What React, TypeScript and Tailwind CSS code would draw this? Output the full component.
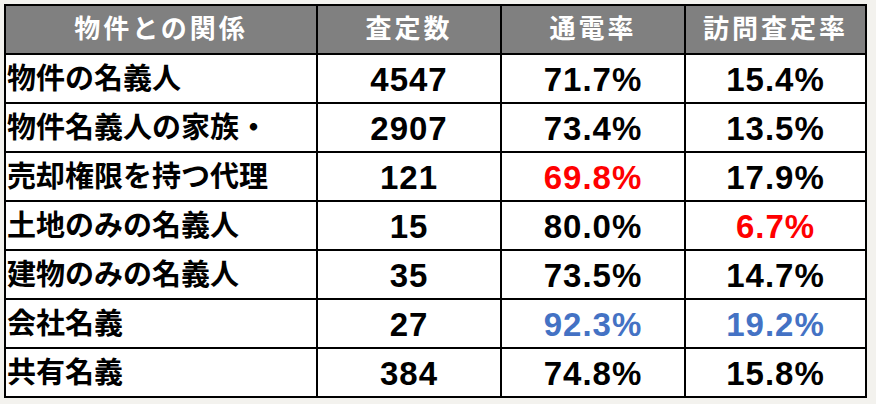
const rows: { name: string; count: string; call: string; visit: string; callColor?: string; visitColor?: string }[] = [
  { name: "物件の名義人", count: "4547", call: "71.7%", visit: "15.4%" },
  { name: "物件名義人の家族・", count: "2907", call: "73.4%", visit: "13.5%" },
  { name: "売却権限を持つ代理", count: "121", call: "69.8%", visit: "17.9%", callColor: "text-[#ff0000]" },
  { name: "土地のみの名義人", count: "15", call: "80.0%", visit: "6.7%", visitColor: "text-[#ff0000]" },
  { name: "建物のみの名義人", count: "35", call: "73.5%", visit: "14.7%" },
  { name: "会社名義", count: "27", call: "92.3%", visit: "19.2%", callColor: "text-[#4472c4]", visitColor: "text-[#4472c4]" },
  { name: "共有名義", count: "384", call: "74.8%", visit: "15.8%" },
];

const headers = ["物件との関係", "査定数", "通電率", "訪問査定率"];

export default function App() {
  return (
    <div
      className="w-[876px] h-[404px] bg-[#f3f2ee] pt-[4px] pl-[4px]"
      style={{ fontFamily: '"Liberation Sans", "Noto Sans CJK JP", sans-serif' }}
    >
      <div className="grid w-[863px] grid-cols-[310px_182px_182px_179px] grid-rows-[repeat(8,47px)] gap-[2px] bg-black p-[2px]">
        {headers.map((h) => (
          <div
            key={h}
            className="flex items-center justify-center bg-[#808080] text-[26px] font-bold tracking-[3px] text-white"
          >
            {h}
          </div>
        ))}
        {rows.map((r) => (
          <div key={r.name} className="contents">
            <div className="flex items-center bg-white pl-px pt-[2px] text-[29px] font-bold text-black">{r.name}</div>
            <div className="flex items-center justify-center bg-white pt-[2px] text-[33px] font-bold tracking-[1px] text-black">
              {r.count}
            </div>
            <div
              className={`flex items-center justify-center bg-white pt-[2px] text-[33px] font-bold tracking-[1px] ${r.callColor ?? "text-black"}`}
            >
              {r.call}
            </div>
            <div
              className={`flex items-center justify-center bg-white pt-[2px] text-[33px] font-bold tracking-[1px] ${r.visitColor ?? "text-black"}`}
            >
              {r.visit}
            </div>
          </div>
        ))}
      </div>
    </div>
  );
}
